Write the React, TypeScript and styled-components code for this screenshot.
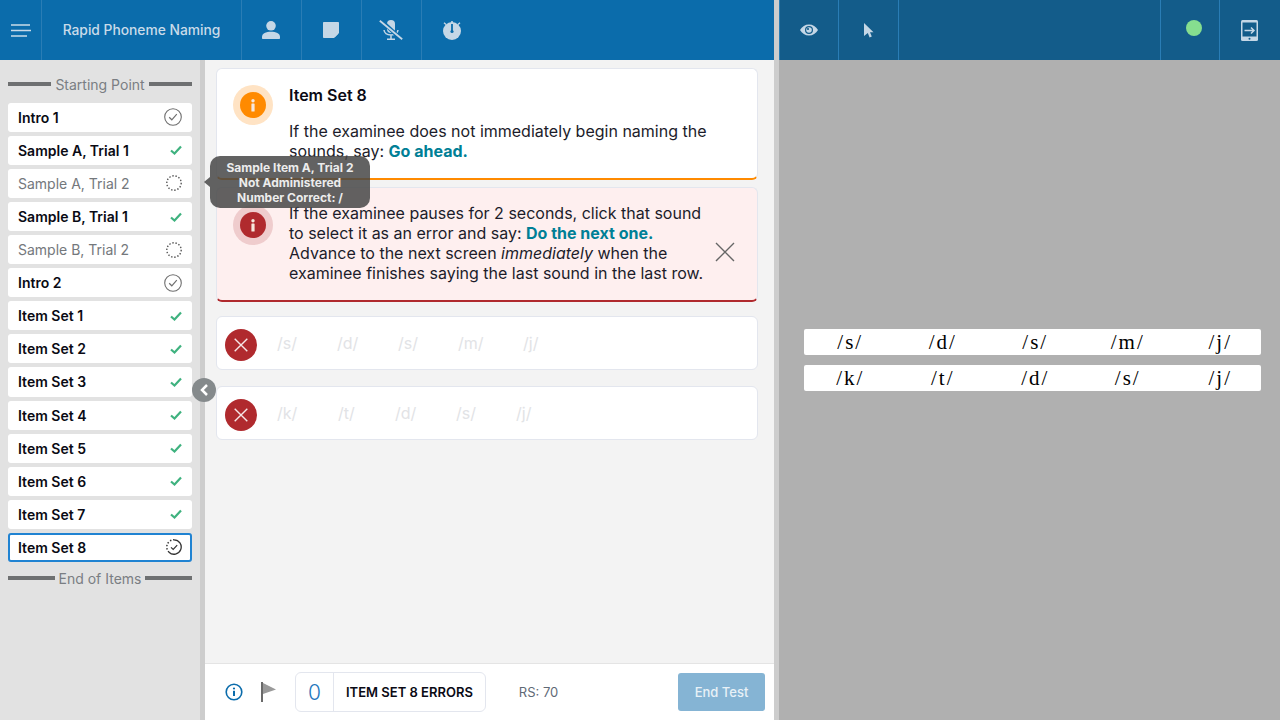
import React from 'react';
import styled, { createGlobalStyle } from 'styled-components';

const GlobalStyle = createGlobalStyle`
  html, body {
    margin: 0;
    padding: 0;
    height: 100%;
    overflow: hidden;
    font-family: Inter, "Liberation Sans", sans-serif;
  }
  #root { height: 100%; }
  * { box-sizing: border-box; }
`;

const Page = styled.div`
  display: flex;
  width: 1280px;
  height: 720px;
  background: #cdcdcd;
`;

const LeftPane = styled.div`
  display: flex;
  flex-direction: column;
  width: 774px;
  height: 100%;
`;

const RightPane = styled.div`
  display: flex;
  flex-direction: column;
  width: 501px;
  height: 100%;
  margin-left: 5px;
`;

const TopBar = styled.div<{ $dark?: boolean }>`
  display: flex;
  flex: none;
  height: 60px;
  background: ${(p) => (p.$dark ? '#135c8a' : '#0b6cab')};
`;

const BarCell = styled.div<{ $width: number; $noBorder?: boolean; $borderLeft?: boolean; $nudge?: boolean }>`
  display: flex;
  align-items: center;
  justify-content: center;
  flex: none;
  width: ${(p) => p.$width}px;
  height: 100%;
  padding-right: ${(p) => (p.$nudge ? '1px' : '0')};
  border-right: ${(p) => (p.$noBorder ? 'none' : '1px solid #2a7db5')};
  border-left: ${(p) => (p.$borderLeft ? '1px solid #2a7db5' : 'none')};
`;

const BarTitle = styled.span`
  font-size: 13.800px;
  font-weight: 500;
  color: #c9dbe9;
  white-space: nowrap;
`;

const BarSpacer = styled.div`
  flex: 1;
  height: 100%;
`;

const StatusDot = styled.span`
  width: 16px;
  height: 16px;
  margin: -4px 0 0 8px;
  border-radius: 50%;
  background: #86de8f;
`;

const Body = styled.div`
  position: relative;
  display: flex;
  flex: 1;
  min-height: 0;
`;

const Sidebar = styled.div`
  display: flex;
  flex-direction: column;
  flex: none;
  width: 205px;
  padding: 15px 8px 0 8px;
  background: #e2e2e2;
  border-right: 5px solid #cdcdcd;
`;

const SectionLabel = styled.div<{ $last?: boolean }>`
  display: flex;
  align-items: center;
  gap: 4px;
  height: 18px;
  margin: ${(p) => (p.$last ? '7.500px 0 0' : '0 0 9.800px')};
  font-size: 14px;
  color: #7a7e83;
  white-space: nowrap;
  &::before, &::after {
    content: '';
    flex: 1;
    height: 4px;
    background: #6e7071;
  }
`;

const ItemList = styled.div`
  display: flex;
  flex-direction: column;
  gap: 4px;
`;

const Item = styled.div<{ $muted?: boolean; $active?: boolean }>`
  display: flex;
  align-items: center;
  justify-content: space-between;
  height: 29.080px;
  padding: 0 ${(p) => (p.$active ? '8px' : '10px')};
  background: #fff;
  border-radius: 3px;
  border: ${(p) => (p.$active ? '2px solid #2083d2' : 'none')};
  font-size: 14px;
  font-weight: ${(p) => (p.$muted ? 400 : 600)};
  color: ${(p) => (p.$muted ? '#74787c' : '#0a0a14')};
  white-space: nowrap;
`;

const Main = styled.div`
  display: flex;
  flex-direction: column;
  flex: 1;
  min-width: 0;
  background: #f3f3f3;
`;

const Content = styled.div`
  display: flex;
  flex-direction: column;
  flex: 1;
  padding: 8px 16px 0 11px;
`;

const Callout = styled.div<{ $tone: 'info' | 'alert' }>`
  display: flex;
  align-items: flex-start;
  gap: 16px;
  height: ${(p) => (p.$tone === 'info' ? '112px' : '115px')};
  margin-bottom: ${(p) => (p.$tone === 'info' ? '7px' : '14px')};
  padding: ${(p) => (p.$tone === 'info' ? '16px 16px 0 16px' : '15px 16px 0 16px')};
  background: ${(p) => (p.$tone === 'info' ? '#fff' : '#feefef')};
  border: 1px solid #e3e6ee;
  border-bottom: 2px solid ${(p) => (p.$tone === 'info' ? '#ff8a00' : '#b02a2e')};
  border-radius: 6px;
`;

const IconHalo = styled.div<{ $tone: 'info' | 'alert' }>`
  display: flex;
  align-items: center;
  justify-content: center;
  flex: none;
  width: 40px;
  height: 40px;
  margin-top: ${(p) => (p.$tone === 'info' ? '0' : '2px')};
  border-radius: 50%;
  background: ${(p) => (p.$tone === 'info' ? '#ffe3c4' : '#efcccd')};
`;

const IconCore = styled.div<{ $tone: 'info' | 'alert' }>`
  display: flex;
  align-items: center;
  justify-content: center;
  width: 26px;
  height: 26px;
  border-radius: 50%;
  background: ${(p) => (p.$tone === 'info' ? '#ff8a00' : '#b02a2e')};
`;

const CalloutText = styled.div`
  flex: 1;
  min-width: 0;
`;

const CalloutTitle = styled.div`
  margin: 0 0 16px;
  font-size: 16px;
  line-height: 20px;
  font-weight: 600;
  color: #0a0a14;
`;

const Paragraph = styled.p`
  margin: 0;
  font-size: 16px;
  line-height: 20px;
  color: #1c1c2a;
`;

const Say = styled.b`
  font-weight: 700;
  color: #007f96;
`;

const CloseButton = styled.div`
  align-self: center;
  display: flex;
  flex: none;
  margin: 0 6px 0 -10px;
`;

const RowCard = styled.div`
  display: flex;
  align-items: center;
  height: 54px;
  margin-bottom: 16px;
  padding: 0 8px;
  background: #fff;
  border: 1px solid #e3e6ee;
  border-radius: 6px;
`;

const ErrorBadge = styled.div`
  display: flex;
  align-items: center;
  justify-content: center;
  flex: none;
  width: 32px;
  height: 32px;
  margin: 4px 20px 0 0;
  border-radius: 50%;
  background: #b02a2e;
`;

const Sound = styled.span<{ $width: number }>`
  flex: none;
  width: ${(p) => p.$width}px;
  font-size: 16px;
  color: #e2e3e6;
`;

const Footer = styled.div`
  display: flex;
  align-items: center;
  flex: none;
  height: 57px;
  padding: 0 9px 0 20px;
  background: #fff;
  border-top: 1px solid #e4e4e4;
`;

const FooterIcon = styled.div<{ $gap: number }>`
  display: flex;
  flex: none;
  margin-right: ${(p) => p.$gap}px;
`;

const ErrorCounter = styled.div`
  display: flex;
  align-items: stretch;
  flex: none;
  height: 40px;
  border: 1px solid #e3e6ee;
  border-radius: 6px;
`;

const CounterValue = styled.div`
  display: flex;
  align-items: center;
  justify-content: center;
  width: 38px;
  font-size: 21px;
  font-weight: 300;
  color: #1f77bd;
  border-right: 1px solid #e3e6ee;
`;

const CounterLabel = styled.div`
  display: flex;
  align-items: center;
  padding: 0 12px;
  font-size: 13px;
  font-weight: 600;
  color: #0a0a14;
  white-space: nowrap;
`;

const RawScore = styled.span`
  margin-left: 33px;
  font-size: 13px;
  color: #5f6a76;
`;

const EndTest = styled.button`
  margin-left: auto;
  width: 87px;
  height: 38px;
  padding: 0;
  border: none;
  border-radius: 3px;
  background: #85b4d4;
  color: #e8f1f7;
  font-family: inherit;
  font-size: 13px;
  font-weight: 500;
`;

const Tooltip = styled.div`
  position: absolute;
  left: 210px;
  top: 96px;
  width: 160px;
  padding: 4px 8px 3px;
  background: rgba(70, 70, 70, 0.85);
  border-radius: 10px;
  font-size: 12px;
  line-height: 15px;
  font-weight: 700;
  color: #ececec;
  text-align: center;
  &::before {
    content: '';
    position: absolute;
    left: -6px;
    top: 21px;
    border-style: solid;
    border-width: 5px 6px 5px 0;
    border-color: transparent rgba(70, 70, 70, 0.85) transparent transparent;
  }
`;

const Collapse = styled.div`
  position: absolute;
  left: 192px;
  top: 318px;
  display: flex;
  align-items: center;
  justify-content: center;
  width: 24px;
  height: 24px;
  border-radius: 50%;
  background: #858a8c;
`;

const Stimulus = styled.div`
  display: flex;
  flex: 1;
  flex-direction: column;
  gap: 10px;
  padding: 269px 19px 0 25px;
  background: #b0b0b0;
`;

const StimulusRow = styled.div`
  display: grid;
  grid-template-columns: repeat(5, 92.500px);
  align-items: center;
  height: 26px;
  padding-top: 1px;
  background: #fff;
  border-radius: 2px;
  font-family: "Liberation Serif", serif;
  font-size: 21px;
  letter-spacing: 2px;
  color: #000;
`;

const StimulusCell = styled.span`
  text-align: center;
`;

const MenuIcon = () => (
  <svg width="20" height="13" viewBox="0 0 20 13">
    <path d="M0 1h19M0 6.500h20M0 12h16" stroke="#c9dbe9" strokeWidth="1.700" fill="none" />
  </svg>
);

const PersonIcon = () => (
  <svg width="18" height="18" viewBox="0 0 18 18" fill="#c5d7e6">
    <circle cx="9" cy="4.800" r="4.800" />
    <path d="M0 16c0-3.600 4-5.200 9-5.200s9 1.600 9 5.200v1c0 .6-.4 1-1 1H1c-.6 0-1-.4-1-1z" />
  </svg>
);

const NoteIcon = () => (
  <svg width="16" height="16" viewBox="0 0 16 16">
    <path d="M.8 0h14.400a.8.800 0 0 1 .8.800V11l-5 5H.8a.8.800 0 0 1-.8-.8V.8A.8.800 0 0 1 .8 0z" fill="#c5d7e6" />
    <path d="M11.500 15.500v-4h4z" fill="#c5d7e6" />
  </svg>
);

const MicOffIcon = () => (
  <svg width="24" height="20" viewBox="0 0 24 20" fill="none">
    <path d="M8 4a4 4 0 0 1 8 0v5a4 4 0 0 1-8 0z" fill="#c5d7e6" />
    <path d="M5 10c.5 3.600 3.500 5 7 5s6.500-1.400 7-5M12 15v3.500M8 19.200h8" stroke="#c5d7e6" strokeWidth="1.500" />
    <path d="M1.500 0l21 19.500" stroke="#0b6cab" strokeWidth="4" />
    <path d="M.8.800l22.400 18.400" stroke="#c5d7e6" strokeWidth="1.800" />
  </svg>
);

const TimerIcon = () => (
  <svg width="18" height="19" viewBox="0 0 18 19">
    <circle cx="9" cy="10" r="9" fill="#c5d7e6" />
    <path d="M9 0v2" stroke="#c5d7e6" strokeWidth="1.600" />
    <path d="M1 1.800l2 1.700M17 1.800l-2 1.700" stroke="#c5d7e6" strokeWidth="1.400" />
    <path d="M9 3v7" stroke="#0b6cab" strokeWidth="1.800" />
    <circle cx="9" cy="10.500" r="1.600" fill="#0b6cab" />
  </svg>
);

const EyeIcon = () => (
  <svg width="18" height="12" viewBox="0 0 18 12">
    <path d="M0 6c2-3.500 5.200-5.500 9-5.500S16 2.500 18 6c-2 3.500-5.200 5.500-9 5.500S2 9.500 0 6z" fill="#c5d7e6" />
    <circle cx="9" cy="6" r="4" fill="#135c8a" />
    <circle cx="9" cy="6" r="2.800" fill="#c5d7e6" />
    <circle cx="8" cy="5" r="1.100" fill="#135c8a" />
  </svg>
);

const PointerIcon = () => (
  <svg width="10" height="15" viewBox="0 0 10 15">
    <path d="M0 0l9.500 9.200H6l1.800 4.200-2.200 1L3.800 10 0 13z" fill="#c5d7e6" />
  </svg>
);

const TabletIcon = () => (
  <svg width="17" height="21" viewBox="0 0 17 21">
    <rect x="0" y="0" width="17" height="21" rx="1.500" fill="#c5d7e6" />
    <rect x="1.500" y="2.500" width="14" height="14" fill="#135c8a" />
    <path d="M3.500 10.500h9.500M10 7.500l3 3-3 3" stroke="#c5d7e6" strokeWidth="1.500" fill="none" />
    <circle cx="8.500" cy="18.800" r="1" fill="#135c8a" />
  </svg>
);

const CheckIcon = () => (
  <svg width="12" height="10" viewBox="0 0 12 10">
    <path d="M1 5.500l3.500 3L11 1.500" stroke="#3fb27f" strokeWidth="2.200" fill="none" />
  </svg>
);

const CircleCheckIcon = () => (
  <svg width="18" height="18" viewBox="0 0 18 18" fill="none">
    <circle cx="9" cy="9" r="8.300" stroke="#6f6f6f" strokeWidth="1.100" />
    <path d="M5.200 9.300l2.600 2.500 5-5.600" stroke="#6f6f6f" strokeWidth="1.200" />
  </svg>
);

const DottedCircleIcon = () => (
  <svg width="16" height="16" viewBox="0 0 16 16" fill="none">
    <circle cx="8" cy="8" r="7.200" stroke="#555" strokeWidth="1.400" strokeDasharray="1.400 1.800" />
  </svg>
);

const CurrentIcon = () => (
  <svg width="16" height="16" viewBox="0 0 16 16" fill="none">
    <path d="M8 .8a7.200 7.200 0 1 1-5 12.400" stroke="#333" strokeWidth="1.300" />
    <path d="M3 13.200A7.200 7.200 0 0 1 8 .8" stroke="#333" strokeWidth="1.500" strokeDasharray="1.400 1.800" />
    <path d="M5 8.300l2.200 2.200 4-4.400" stroke="#333" strokeWidth="1.200" />
  </svg>
);

const InfoGlyph = () => (
  <svg width="4" height="13" viewBox="0 0 4 13" fill="#f6e7dc">
    <circle cx="2" cy="1.700" r="1.700" />
    <rect x="0.400" y="4.500" width="3.200" height="8" rx="0.600" />
  </svg>
);

const CrossIcon = ({ size, color, width }: { size: number; color: string; width: number }) => (
  <svg width={size} height={size} viewBox="0 0 20 20">
    <path d="M1 1l18 18M19 1L1 19" stroke={color} strokeWidth={width} fill="none" />
  </svg>
);

const FooterInfoIcon = () => (
  <svg width="18" height="18" viewBox="0 0 18 18" fill="none">
    <circle cx="9" cy="9" r="7.800" stroke="#0b6cab" strokeWidth="1.600" />
    <circle cx="9" cy="5.500" r="1.100" fill="#0b6cab" />
    <rect x="8" y="7.800" width="2" height="5.200" fill="#0b6cab" />
  </svg>
);

const FlagIcon = () => (
  <svg width="16" height="20" viewBox="0 0 16 20">
    <rect x="0" y="0" width="2" height="20" fill="#6a6a6a" />
    <path d="M2 1l13 6.500L2 12z" fill="#9a9a9a" />
  </svg>
);

const ChevronLeft = () => (
  <svg width="10" height="12" viewBox="0 0 10 12">
    <path d="M8 1L3 6l5 5" stroke="#fff" strokeWidth="2.500" fill="none" />
  </svg>
);

type Status = 'check' | 'circle' | 'dotted' | 'current';

const items: { label: string; status: Status }[] = [
  { label: 'Intro 1', status: 'circle' },
  { label: 'Sample A, Trial 1', status: 'check' },
  { label: 'Sample A, Trial 2', status: 'dotted' },
  { label: 'Sample B, Trial 1', status: 'check' },
  { label: 'Sample B, Trial 2', status: 'dotted' },
  { label: 'Intro 2', status: 'circle' },
  { label: 'Item Set 1', status: 'check' },
  { label: 'Item Set 2', status: 'check' },
  { label: 'Item Set 3', status: 'check' },
  { label: 'Item Set 4', status: 'check' },
  { label: 'Item Set 5', status: 'check' },
  { label: 'Item Set 6', status: 'check' },
  { label: 'Item Set 7', status: 'check' },
  { label: 'Item Set 8', status: 'current' },
];

const statusIcon = (status: Status) => {
  if (status === 'check') return <CheckIcon />;
  if (status === 'circle') return <CircleCheckIcon />;
  if (status === 'dotted') return <DottedCircleIcon />;
  return <CurrentIcon />;
};

const rows = [
  ['/s/', '/d/', '/s/', '/m/', '/j/'],
  ['/k/', '/t/', '/d/', '/s/', '/j/'],
];

const soundWidths = [
  [60, 61, 60, 65, 40],
  [61, 57, 61, 60, 40],
];

export default function App() {
  return (
    <Page>
      <GlobalStyle />
      <LeftPane>
        <TopBar>
          <BarCell $width={42}><MenuIcon /></BarCell>
          <BarCell $width={200}><BarTitle>Rapid Phoneme Naming</BarTitle></BarCell>
          <BarCell $width={60} $nudge><PersonIcon /></BarCell>
          <BarCell $width={60} $nudge><NoteIcon /></BarCell>
          <BarCell $width={60} $nudge><MicOffIcon /></BarCell>
          <BarCell $width={60} $noBorder><TimerIcon /></BarCell>
        </TopBar>
        <Body>
          <Sidebar>
            <SectionLabel>Starting Point</SectionLabel>
            <ItemList>
              {items.map((item, i) => (
                <Item
                  key={item.label}
                  $muted={item.status === 'dotted'}
                  $active={i === items.length - 1}
                >
                  {item.label}
                  {statusIcon(item.status)}
                </Item>
              ))}
            </ItemList>
            <SectionLabel $last>End of Items</SectionLabel>
          </Sidebar>
          <Main>
            <Content>
              <Callout $tone="info">
                <IconHalo $tone="info"><IconCore $tone="info"><InfoGlyph /></IconCore></IconHalo>
                <CalloutText>
                  <CalloutTitle>Item Set 8</CalloutTitle>
                  <Paragraph>
                    If the examinee does not immediately begin naming the sounds, say: <Say>Go ahead.</Say>
                  </Paragraph>
                </CalloutText>
              </Callout>
              <Callout $tone="alert">
                <IconHalo $tone="alert"><IconCore $tone="alert"><InfoGlyph /></IconCore></IconHalo>
                <CalloutText>
                  <Paragraph>
                    If the examinee pauses for 2 seconds, click that sound to select it as an error and say: <Say>Do the next one.</Say> Advance to the next screen <i>immediately</i> when the examinee finishes saying the last sound in the last row.
                  </Paragraph>
                </CalloutText>
                <CloseButton><CrossIcon size={20} color="#666" width={1.4} /></CloseButton>
              </Callout>
              {rows.map((row, r) => (
                <RowCard key={r}>
                  <ErrorBadge><CrossIcon size={14} color="#f6e7e7" width={2} /></ErrorBadge>
                  {row.map((s, i) => (
                    <Sound key={i} $width={soundWidths[r][i]}>{s}</Sound>
                  ))}
                </RowCard>
              ))}
            </Content>
            <Footer>
              <FooterIcon $gap={18}><FooterInfoIcon /></FooterIcon>
              <FooterIcon $gap={18}><FlagIcon /></FooterIcon>
              <ErrorCounter>
                <CounterValue>0</CounterValue>
                <CounterLabel>ITEM SET 8 ERRORS</CounterLabel>
              </ErrorCounter>
              <RawScore>RS: 70</RawScore>
              <EndTest>End Test</EndTest>
            </Footer>
          </Main>
          <Tooltip>
            Sample Item A, Trial 2<br />
            Not Administered<br />
            Number Correct: /
          </Tooltip>
          <Collapse><ChevronLeft /></Collapse>
        </Body>
      </LeftPane>
      <RightPane>
        <TopBar $dark>
          <BarCell $width={60} $borderLeft><EyeIcon /></BarCell>
          <BarCell $width={60}><PointerIcon /></BarCell>
          <BarSpacer />
          <BarCell $width={60} $borderLeft><StatusDot /></BarCell>
          <BarCell $width={60} $noBorder $nudge><TabletIcon /></BarCell>
        </TopBar>
        <Stimulus>
          {rows.map((row, r) => (
            <StimulusRow key={r}>
              {row.map((s, i) => (
                <StimulusCell key={i}>{s}</StimulusCell>
              ))}
            </StimulusRow>
          ))}
        </Stimulus>
      </RightPane>
    </Page>
  );
}
